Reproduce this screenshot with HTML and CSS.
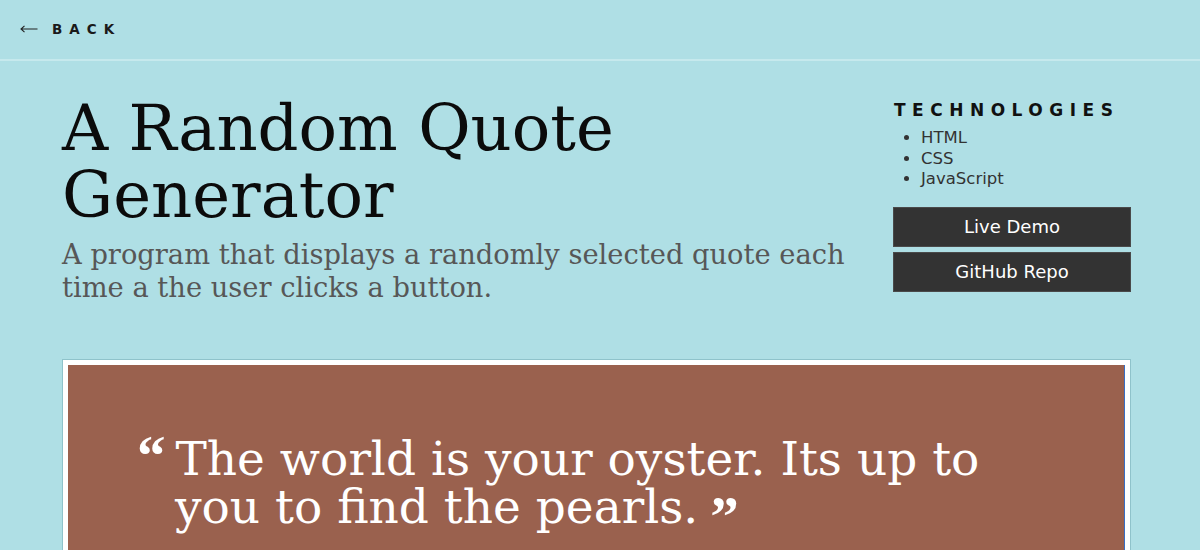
FILE: index.html
```html
<!DOCTYPE html>
<html lang="en">
<head>
<meta charset="utf-8">
<title>A Random Quote Generator</title>
<link rel="stylesheet" href="styles.css">
</head>
<body>
<header class="topbar">
  <a class="back" href="#">
    <svg class="arrow" width="18" height="8" viewBox="0 0 18 8" aria-hidden="true"><path d="M17.5 4H1M4.5 0.8L1 4l3.5 3.2" fill="none" stroke="#222" stroke-width="1.1"/></svg>
    <span class="back-label">BACK</span>
  </a>
</header>
<main class="page">
  <section class="intro">
    <div class="intro-text">
      <h1 class="title">A Random Quote Generator</h1>
      <p class="summary">A program that displays a randomly selected quote each time a the user clicks a button.</p>
    </div>
    <aside class="side">
      <h2 class="side-title">TECHNOLOGIES</h2>
      <ul class="tech-list">
        <li>HTML</li>
        <li>CSS</li>
        <li>JavaScript</li>
      </ul>
      <a class="btn" href="#">Live Demo</a>
      <a class="btn" href="#">GitHub Repo</a>
    </aside>
  </section>
  <section class="demo">
    <div class="quote-card">
      <p class="quote"><span class="qmark open">&ldquo;</span>The world is your oyster. Its up to you to find the pearls.<span class="qmark close">&rdquo;</span></p>
    </div>
  </section>
</main>
</body>
</html>
```
FILE: styles.css
```css
* { box-sizing: border-box; }
html, body { margin: 0; padding: 0; }
body {
  background: #afdfe5;
  font-family: "DejaVu Sans", "Liberation Sans", sans-serif;
  color: #111;
  overflow: hidden;
}
.topbar {
  height: 61px;
  border-bottom: 2px solid #c6e9ed;
  display: flex;
  align-items: center;
  padding: 0 0 2px 20px;
}
.back {
  display: flex;
  align-items: center;
  text-decoration: none;
  color: #1a1a1a;
}
.arrow {
  display: block;
  margin-right: 14px;
}
.back-label {
  font-weight: bold;
  font-size: 13.5px;
  letter-spacing: 7px;
}
.page {
  padding: 0 69px 0 62px;
}
.intro {
  display: flex;
  justify-content: space-between;
  padding-top: 34px;
}
.intro-text {
  width: 800px;
}
.title {
  font-family: "DejaVu Serif", serif;
  font-weight: normal;
  font-size: 64px;
  line-height: 67px;
  margin: 0;
  color: #0b0b0b;
}
.summary {
  font-family: "DejaVu Serif", serif;
  font-size: 27.3px;
  line-height: 33px;
  color: #575757;
  margin: 9px 0 0;
}
.side {
  width: 238px;
  padding-top: 5px;
}
.side-title {
  font-size: 17px;
  font-weight: bold;
  letter-spacing: 6.5px;
  margin: 0 0 8px 1px;
  color: #111;
}
.tech-list {
  margin: 0 0 17px;
  padding-left: 28px;
  font-size: 16.5px;
  line-height: 20.5px;
  color: #333;
}
.btn {
  display: block;
  background: #333;
  color: #fff;
  text-decoration: none;
  text-align: center;
  font-size: 18px;
  height: 40px;
  line-height: 38px;
  border: 1px solid #4a4a4a;
  margin-bottom: 5px;
}
.demo {
  margin-top: 55px;
}
.quote-card {
  border: 1px solid #8fc3cb;
  background: #fff;
  padding: 5px 5px 0;
}
.quote {
  background: #9a614e;
  border-right: 1px solid #3a6ec4;
  margin: 0;
  padding: 70px 60px 40px 107px;
  text-indent: -38px;
  color: #fff;
  font-family: "DejaVu Serif", serif;
  font-size: 47px;
  line-height: 48px;
  min-height: 200px;
}
.qmark {
  font-family: "Liberation Serif", serif;
  font-weight: bold;
  font-size: 57px;
  line-height: 0;
}
.qmark.open {
  margin-right: 10px;
}
.qmark.close {
  margin-left: 12px;
  vertical-align: -13px;
}
```
